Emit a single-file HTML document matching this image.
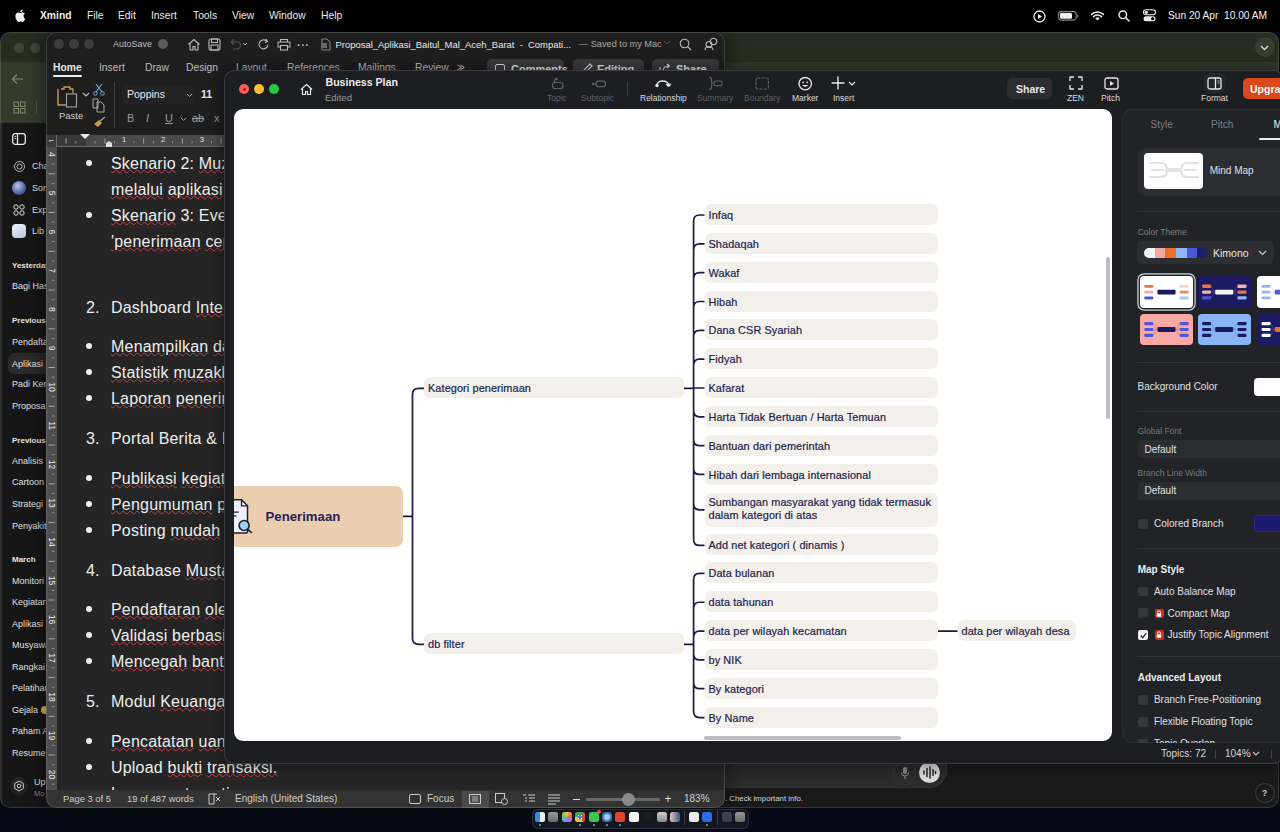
<!DOCTYPE html>
<html><head><meta charset="utf-8">
<style>
*{margin:0;padding:0;box-sizing:border-box}
html,body{width:1280px;height:832px;overflow:hidden;background:#070a14;font-family:"Liberation Sans",sans-serif}
.a{position:absolute}
.t{position:absolute;white-space:nowrap;line-height:1}
svg{position:absolute;overflow:visible}
/* menu bar */
#menubar{left:0;top:0;width:1280px;height:32px;background:#000}
#menubar .t{color:#f2f2f2;font-size:10.3px;top:10.5px}
/* green window */
#gw{left:0;top:32px;width:1279px;height:776px;background:#1a1a1a;border-radius:10px;overflow:hidden}
#gwhead{left:0;top:0;width:1279px;height:30px;background:#272d22}
#gwhead2{left:0;top:30px;width:1279px;height:61px;background:#333c2c}
#gwside{left:0;top:91px;width:60px;height:690px;background:#161616}
#gw .t{color:#e2e2e2;font-size:9px}
#gw .h{font-weight:bold;font-size:8px;color:#e6e6e6}
/* word window */
#ww{left:46px;top:32px;width:679px;height:776px;background:#1e1e1e;border-radius:10px;overflow:hidden;box-shadow:0 0 18px 3px rgba(0,0,0,.4)}
#ww .tab{color:#bdbdbd;font-size:10.3px;top:30.5px}
#doc{left:11px;top:115px;width:668px;height:643px;background:#252525}
#doc .l{position:absolute;left:54px;color:#eeeeee;font-size:16px;white-space:nowrap;line-height:1;letter-spacing:0.2px}
#doc .sq{text-decoration:underline wavy #c2414b;text-decoration-thickness:1px;text-underline-offset:0px}
#doc .b{position:absolute;left:29px;width:6px;height:6px;border-radius:50%;background:#eee}
#doc .n{position:absolute;left:29px;color:#eee;font-size:16px;line-height:1}
/* xmind window */
#xw{left:224px;top:70px;width:1060px;height:694px;background:#1c1e21;border-radius:10px;overflow:hidden;box-shadow:inset 0 0 0 1px #3c3d40, 0 0 14px 2px rgba(0,0,0,.4)}
#canvas{left:10px;top:39px;width:878px;height:632px;background:#fff;border-radius:9px;overflow:hidden}
.node{position:absolute;background:#f3efea;border-radius:6px;color:#211e4c;font-size:10.9px;letter-spacing:0.1px;padding-left:4px;line-height:22px;white-space:nowrap;height:21px;-webkit-text-stroke:0.2px #211e4c}
#xw .tl{color:#5f6166;font-size:8.5px;top:23.5px}
#xw .tlw{color:#dcdcdc;font-size:8.5px;top:23.5px}
#panel{left:898px;top:38.5px;width:170px;height:634px;background:#212327;border-radius:10px;box-shadow:inset 0 0 0 1px #2c2e32;overflow:hidden}
#panel .t{color:#d8d8d8;font-size:10px}
#panel .s{color:#8a8c90;font-size:8.5px}
#panel .h{color:#e6e6e6;font-size:10px;font-weight:bold}
.cb{position:absolute;width:9px;height:9px;border-radius:2px;background:#3a3c40}
.sep{position:absolute;height:1px;background:#34363a}
.dd{position:absolute;height:20px;background:#2d2f33;border-radius:4px}
</style></head><body>

<!-- ============ MENU BAR ============ -->
<div id="menubar" class="a">
  <svg style="left:15px;top:9px" width="11" height="13" viewBox="0 0 11 13"><path d="M8.6 6.9c0-1.5 1.2-2.2 1.3-2.3-.7-1-1.8-1.2-2.2-1.2-.9-.1-1.8.6-2.3.6-.5 0-1.2-.5-2-.5C2.4 3.5 1.4 4.1.9 5c-1.1 1.9-.3 4.8.8 6.300.5.8 1.100 1.600 1.900 1.600.800 0 1-.5 2-.5s1.200.5 2 .5c.8 0 1.300-.8 1.800-1.500.6-.8.8-1.600.8-1.700 0 0-1.600-.6-1.600-2.800zM7.100 2.400c.4-.5.7-1.200.6-1.900-.6 0-1.300.4-1.800.9-.4.400-.7 1.100-.6 1.800.7.100 1.400-.3 1.800-.8z" fill="#f2f2f2"/></svg>
  <div class="t" style="left:40px;font-weight:bold">Xmind</div>
  <div class="t" style="left:87px">File</div>
  <div class="t" style="left:118px">Edit</div>
  <div class="t" style="left:151px">Insert</div>
  <div class="t" style="left:193px">Tools</div>
  <div class="t" style="left:232px">View</div>
  <div class="t" style="left:269px">Window</div>
  <div class="t" style="left:321px">Help</div>
  <!-- status icons -->
  <svg style="left:1033px;top:10px" width="13" height="13"><circle cx="6.5" cy="6.5" r="5.5" fill="none" stroke="#eee" stroke-width="1.3"/><path d="M5 4v5l4-2.5z" fill="#eee"/></svg>
  <svg style="left:1058px;top:11px" width="22" height="10"><rect x="0.6" y="0.6" width="17.5" height="8.5" rx="2.5" fill="none" stroke="#888" stroke-width="1.1"/><rect x="2" y="2" width="12" height="5.8" rx="1.2" fill="#eee"/><path d="M19.3 3.3v3.4c.8-.3 1.200-1 1.200-1.700s-.4-1.400-1.200-1.700z" fill="#888"/></svg>
  <svg style="left:1090px;top:10px" width="15" height="11" viewBox="0 0 15 11"><path d="M7.5 10.6 5.4 8.4a3 3 0 0 1 4.2 0z" fill="#eee"/><path d="M3.6 6.6a5.4 5.4 0 0 1 7.8 0M1.6 4.4a8.3 8.3 0 0 1 11.800 0" fill="none" stroke="#eee" stroke-width="1.6" stroke-linecap="round"/></svg>
  <svg style="left:1118px;top:10px" width="12" height="12"><circle cx="4.8" cy="4.8" r="3.8" fill="none" stroke="#eee" stroke-width="1.4"/><path d="M7.6 7.6l3.400 3.400" stroke="#eee" stroke-width="1.5" stroke-linecap="round"/></svg>
  <svg style="left:1143px;top:9px" width="13" height="13"><rect x="0.5" y="0.8" width="12" height="5" rx="2.5" fill="none" stroke="#eee" stroke-width="1.1"/><circle cx="3.3" cy="3.3" r="1.6" fill="#eee"/><rect x="0.5" y="7.2" width="12" height="5" rx="2.5" fill="#eee"/><circle cx="9.700" cy="9.700" r="1.600" fill="#000"/></svg>
  <div class="t" style="left:1168px;font-size:10.2px">Sun 20 Apr</div>
  <div class="t" style="left:1224px;font-size:10.2px">10.00 AM</div>
</div>

<!-- ============ GREEN (CHAT) WINDOW ============ -->
<div id="gw" class="a">
  <div id="gwhead" class="a"></div>
  <div id="gwhead2" class="a"></div>
  <div class="a" style="left:14px;top:11px;width:10px;height:10px;border-radius:50%;background:#414838"></div>
  <div class="a" style="left:30px;top:11px;width:10px;height:10px;border-radius:50%;background:#414838"></div>
  <svg style="left:11px;top:41px" width="13" height="12"><path d="M12 6H2M6 1.5 1.5 6 6 10.5" fill="none" stroke="#7d8a70" stroke-width="1.2"/></svg>
  <svg style="left:13px;top:69px" width="13" height="13"><rect x="1" y="1" width="4.5" height="4.5" fill="none" stroke="#7d8a70"/><rect x="7.5" y="1" width="4.5" height="4.5" fill="none" stroke="#7d8a70"/><rect x="1" y="7.5" width="4.5" height="4.5" fill="none" stroke="#7d8a70"/><rect x="7.5" y="7.5" width="4.5" height="4.5" fill="none" stroke="#7d8a70"/></svg>
  <div class="a" style="left:36px;top:68px;width:1px;height:14px;background:#4c5643"></div>
  <div id="gwside" class="a"></div>
  <div class="a" style="left:1px;top:91px;width:1px;height:685px;background:#2c2c2c"></div>
  <svg style="left:12px;top:101px" width="14" height="12"><rect x="0.7" y="0.7" width="12.6" height="10.6" rx="2.5" fill="none" stroke="#e8e8e8" stroke-width="1.3"/><path d="M5.5 1v10" stroke="#e8e8e8" stroke-width="1.3"/><path d="M2.500 3.500h1.500M2.500 5.500h1.500" stroke="#e8e8e8" stroke-width="0.9"/></svg>
  <svg style="left:13px;top:128px" width="13" height="13"><circle cx="6.5" cy="6.5" r="5" fill="none" stroke="#bbb" stroke-width="1"/><circle cx="6.5" cy="6.5" r="2.5" fill="none" stroke="#bbb" stroke-width="1"/></svg>
  <div class="t" style="left:32px;top:130px;font-size:9px;color:#e2e2e2">Cha</div>
  <div class="a" style="left:12px;top:149px;width:14px;height:14px;border-radius:50%;background:radial-gradient(circle at 40% 35%,#b9c6e8,#4f64a8 60%,#2a3566)"></div>
  <div class="t" style="left:32px;top:152px;font-size:9px;color:#e2e2e2">Sor</div>
  <svg style="left:13px;top:172px" width="12" height="12"><circle cx="3" cy="3" r="2.2" fill="none" stroke="#ddd"/><circle cx="9" cy="3" r="2.2" fill="none" stroke="#ddd"/><circle cx="3" cy="9" r="2.2" fill="none" stroke="#ddd"/><circle cx="9" cy="9" r="2.2" fill="none" stroke="#ddd"/></svg>
  <div class="t" style="left:32px;top:174px;font-size:9px;color:#e2e2e2">Exp</div>
  <div class="a" style="left:12px;top:192px;width:14px;height:14px;border-radius:4px;background:linear-gradient(160deg,#f2f4fa,#b8c4dc)"></div>
  <div class="t" style="left:32px;top:195px;font-size:9px;color:#e2e2e2">Lib</div>
  <div class="t h" style="left:12px;top:230px">Yesterday</div>
  <div class="t" style="left:12px;top:250px">Bagi Has</div>
  <div class="t h" style="left:12px;top:285px">Previous</div>
  <div class="t" style="left:12px;top:306px">Pendafta</div>
  <div class="a" style="left:7.5px;top:320.5px;width:53px;height:21px;border-radius:6px;background:#2a2a2a"></div>
  <div class="t" style="left:12px;top:328px">Aplikasi</div>
  <div class="t" style="left:12px;top:348px">Padi Ken</div>
  <div class="t" style="left:12px;top:370px">Proposa</div>
  <div class="t h" style="left:12px;top:405px">Previous</div>
  <div class="t" style="left:12px;top:425px">Analisis</div>
  <div class="t" style="left:12px;top:446px">Cartoon</div>
  <div class="t" style="left:12px;top:468px">Strategi</div>
  <div class="t" style="left:12px;top:490px">Penyakit</div>
  <div class="t h" style="left:12px;top:524px">March</div>
  <div class="t" style="left:12px;top:545px">Monitori</div>
  <div class="t" style="left:12px;top:566px">Kegiatan</div>
  <div class="t" style="left:12px;top:588px">Aplikasi</div>
  <div class="t" style="left:12px;top:609px">Musyawa</div>
  <div class="t" style="left:12px;top:631px">Rangkai</div>
  <div class="t" style="left:12px;top:652px">Pelatihan</div>
  <div class="t" style="left:12px;top:674px">Gejala <span style="display:inline-block;width:8px;height:8px;border-radius:50%;background:#e0b24a;vertical-align:-1px"></span></div>
  <div class="t" style="left:12px;top:695px">Paham A</div>
  <div class="t" style="left:12px;top:717px">Resume</div>
  <div class="a" style="left:10px;top:745px;width:18px;height:18px;border-radius:50%;background:#222"></div>
  <svg style="left:13px;top:748px" width="12" height="12"><path d="M6 1l4.300 2.500v5L6 11 1.700 8.500v-5z" fill="none" stroke="#ccc" stroke-width="1"/><circle cx="6" cy="6" r="1.8" fill="none" stroke="#ccc"/></svg>
  <div class="t" style="left:34px;top:746px;font-size:9px;color:#e2e2e2">Up</div>
  <div class="t" style="left:34px;top:758px;font-size:7.5px;color:#8a8a8a">Mo</div>
  <!-- chat input -->
  <div class="a" style="left:690px;top:690px;width:257px;height:66px;border-radius:18px;background:linear-gradient(#242424,#2c2c2c);box-shadow:inset 0 0 0 1px #333"></div>
  <div class="a" style="left:893px;top:730px;width:23px;height:23px;border-radius:50%;box-shadow:inset 0 0 0 1px #333"></div>
  <svg style="left:900px;top:734px" width="10" height="14"><rect x="3" y="1" width="4" height="7" rx="2" fill="#8a8a8a"/><path d="M1.500 6.500a3.500 3.500 0 0 0 7 0M5 10v3" fill="none" stroke="#8a8a8a" stroke-width="1"/></svg>
  <div class="a" style="left:919px;top:730px;width:21px;height:21px;border-radius:50%;background:#d9d9d9"></div>
  <svg style="left:922px;top:734px" width="15" height="13"><path d="M2 5v3M5 2.500v8M8 1v11M11 3.500v6M13.500 5.500v2" stroke="#222" stroke-width="1.5" stroke-linecap="round"/></svg>
  <div class="t" style="left:725px;top:762.5px;font-size:7.8px;color:#d8d8d8">. Check important info.</div>
  <div class="a" style="left:1255px;top:751px;width:20px;height:20px;border-radius:50%;box-shadow:inset 0 0 0 1px #3a3a3a"></div>
  <div class="t" style="left:1262px;top:757px;font-size:8.5px;color:#ccc;font-weight:bold">?</div>
  <!-- right top chevron -->
  <div class="a" style="left:1254.5px;top:5px;width:20px;height:20px;border-radius:50%;background:#393d34"></div>
  <svg style="left:1260px;top:12.5px" width="9" height="6"><path d="M1 1l3.500 3.500L8 1" fill="none" stroke="#ddd" stroke-width="1.3"/></svg>
  <div class="a" style="left:0;top:0;width:1279px;height:776px;border-radius:10px;box-shadow:inset 0 0 0 1px rgba(255,255,255,.13)"></div>
</div>

<!-- ============ WORD WINDOW ============ -->
<div id="ww" class="a">
  <!-- title bar -->
  <div class="a" style="left:8px;top:7px;width:10px;height:10px;border-radius:50%;background:#3d3d3d"></div>
  <div class="a" style="left:23px;top:7px;width:10px;height:10px;border-radius:50%;background:#3d3d3d"></div>
  <div class="a" style="left:38px;top:7px;width:10px;height:10px;border-radius:50%;background:#3d3d3d"></div>
  <div class="t" style="left:67px;top:7.5px;font-size:9px;color:#bfbfbf">AutoSave</div>
  <div class="a" style="left:112px;top:7px;width:10px;height:10px;border-radius:50%;background:#5a5a5a"></div>
  <svg style="left:141px;top:6px" width="14" height="13"><path d="M1.5 6.5 7 1.5l5.5 5M3 5.2V12h3V8.5h2V12h3V5.2" fill="none" stroke="#bbb" stroke-width="1.1"/></svg>
  <svg style="left:162px;top:6px" width="13" height="13"><rect x="1" y="1" width="11" height="11" rx="2" fill="none" stroke="#bbb" stroke-width="1.1"/><rect x="3.5" y="1" width="6" height="3.5" fill="none" stroke="#bbb" stroke-width="1"/><rect x="3" y="7" width="7" height="5" fill="none" stroke="#bbb" stroke-width="1"/></svg>
  <svg style="left:182px;top:6px" width="20" height="13"><path d="M3 4h6a3.5 3.5 0 0 1 0 7H5M3 4l3-3M3 4l3 3" fill="none" stroke="#555" stroke-width="1.1"/><path d="M15 5l2 2 2-2" fill="none" stroke="#aaa" stroke-width="1"/></svg>
  <svg style="left:211px;top:6px" width="13" height="13"><path d="M11 6.5A4.5 4.5 0 1 1 9.500 3M9 1l1.5 2.5L8 4.500" fill="none" stroke="#bbb" stroke-width="1.1"/></svg>
  <svg style="left:231px;top:6px" width="14" height="13"><path d="M3.5 4V1.5h7V4M2 4h10a1 1 0 0 1 1 1v4h-2.5M3.5 9H1V5a1 1 0 0 1 1-1M3.500 7.500h7v4.5h-7z" fill="none" stroke="#bbb" stroke-width="1.1"/></svg>
  <div class="t" style="left:251px;top:7.5px;font-size:11px;color:#bbb;letter-spacing:0.5px;font-weight:bold">···</div>
  <svg style="left:275px;top:6px" width="10" height="13"><path d="M1 1h5l3 3v8H1z" fill="none" stroke="#888" stroke-width="1"/><rect x="0" y="5" width="6" height="5" fill="#666"/></svg>
  <div class="t" style="left:289.5px;top:7.5px;font-size:9.45px;color:#e8e8e8">Proposal_Aplikasi_Baitul_Mal_Aceh_Barat&nbsp; - &nbsp;Compati...</div>
  <div class="t" style="left:533px;top:7.5px;font-size:9.2px;color:#a8a8a8">— Saved to my Mac</div>
  <svg style="left:617px;top:8px" width="8" height="6"><path d="M1 1l3 3 3-3" fill="none" stroke="#555" stroke-width="1"/></svg>
  <svg style="left:633px;top:6px" width="13" height="13"><circle cx="5.5" cy="5.5" r="4.3" fill="none" stroke="#bbb" stroke-width="1.1"/><path d="M8.5 8.5l3.5 3.5" stroke="#bbb" stroke-width="1.1"/></svg>
  <svg style="left:658px;top:5px" width="15" height="14"><circle cx="9.5" cy="4.5" r="3.2" fill="none" stroke="#bbb" stroke-width="1.1"/><circle cx="5" cy="7.5" r="3" fill="none" stroke="#bbb" stroke-width="1.1"/><path d="M1 13c0-2 2-3.5 4-3.5s4 1.5 4 3.5" fill="none" stroke="#bbb" stroke-width="1.1"/></svg>
  <!-- tabs -->
  <div class="t tab" style="left:7px;color:#e6e6e6;font-weight:bold">Home</div>
  <div class="a" style="left:7px;top:43px;width:29px;height:2px;border-radius:1px;background:#eee"></div>
  <div class="t tab" style="left:53px">Insert</div>
  <div class="t tab" style="left:99px">Draw</div>
  <div class="t tab" style="left:140px">Design</div>
  <div class="t tab" style="left:190px">Layout</div>
  <div class="t tab" style="left:241px">References</div>
  <div class="t tab" style="left:312px">Mailings</div>
  <div class="t tab" style="left:369px">Review</div>
  <div class="t tab" style="left:411px;letter-spacing:-2.5px;transform:scaleX(.8);transform-origin:left">&gt;&gt;</div>
  <div class="a" style="left:441px;top:27px;width:77px;height:22px;border-radius:5px;background:#3b3b3b"></div>
  <div class="a" style="left:449px;top:32px;width:10px;height:10px;border:1.1px solid #ddd;border-radius:2px"></div>
  <div class="t" style="left:465px;top:32px;font-size:11px;color:#e6e6e6;font-weight:bold">Comments</div>
  <div class="a" style="left:527px;top:27px;width:71px;height:22px;border-radius:5px;background:#3b3b3b"></div>
  <svg style="left:535px;top:31px" width="12" height="12"><path d="M2 10l1-3 6-6 2 2-6 6z" fill="none" stroke="#ddd" stroke-width="1.1"/></svg>
  <div class="t" style="left:551px;top:32px;font-size:11px;color:#e6e6e6;font-weight:bold">Editing</div>
  <div class="a" style="left:606px;top:27px;width:67px;height:22px;border-radius:5px;background:#3b3b3b"></div>
  <svg style="left:613px;top:31px" width="12" height="12"><path d="M1 4v7h9M4 8c0-3 2-5 6-5M8 1l2.5 2L8 5" fill="none" stroke="#ddd" stroke-width="1.1"/></svg>
  <div class="t" style="left:630px;top:32px;font-size:11px;color:#e6e6e6;font-weight:bold">Share</div>
  <!-- ribbon -->
  <svg style="left:10px;top:52px" width="26" height="26"><path d="M5 5h3V3h6v2h3v4" fill="none" stroke="#c99a52" stroke-width="1.3"/><path d="M2 5v16h8" fill="none" stroke="#c99a52" stroke-width="1.4"/><rect x="10.5" y="10" width="10" height="13" fill="none" stroke="#9a9a9a" stroke-width="1.2"/></svg>
  <svg style="left:36px;top:60px" width="8" height="6"><path d="M1 1l3 3 3-3" fill="none" stroke="#bbb" stroke-width="1.1"/></svg>
  <div class="t" style="left:13px;top:79px;font-size:9.5px;color:#cfcfcf">Paste</div>
  <svg style="left:47px;top:51px" width="12" height="13"><path d="M3 1l6 8M9 1 3 9" stroke="#7aa4d6" stroke-width="1.1"/><circle cx="2.5" cy="10.5" r="1.8" fill="none" stroke="#7aa4d6"/><circle cx="9.5" cy="10.5" r="1.8" fill="none" stroke="#7aa4d6"/></svg>
  <svg style="left:46px;top:66px" width="14" height="15"><path d="M1 1h5v9H1zM5 4h4l3 3v7H5z" fill="none" stroke="#aaa" stroke-width="1"/></svg>
  <svg style="left:47px;top:84px" width="14" height="12"><path d="M1 8l5-4 3 3-4 4z" fill="#c99a52"/><path d="M7 5l5-4" stroke="#aaa" stroke-width="1.3"/></svg>
  <div class="a" style="left:68px;top:50px;width:1px;height:46px;background:#3d3d3d"></div>
  <div class="a" style="left:76px;top:54px;width:73px;height:18px;border-radius:4px;background:#232323"></div>
  <div class="t" style="left:81px;top:57px;font-size:10.5px;color:#e8e8e8">Poppins</div>
  <svg style="left:140px;top:61px" width="7" height="5"><path d="M1 1l2.5 2.5L6 1" fill="none" stroke="#bbb" stroke-width="1"/></svg>
  <div class="t" style="left:155px;top:57px;font-size:10.5px;color:#e8e8e8;font-weight:bold">11</div>
  <div class="t" style="left:81px;top:81px;font-size:11px;color:#9a9a9a">B</div>
  <div class="t" style="left:100px;top:81px;font-size:11px;color:#9a9a9a;font-style:italic">I</div>
  <div class="t" style="left:119px;top:81px;font-size:11px;color:#9a9a9a;text-decoration:underline">U</div>
  <svg style="left:134px;top:85px" width="7" height="5"><path d="M1 1l2.5 2.5L6 1" fill="none" stroke="#999" stroke-width="1"/></svg>
  <div class="t" style="left:146px;top:81px;font-size:11px;color:#9a9a9a;text-decoration:line-through">ab</div>
  <div class="t" style="left:168px;top:81px;font-size:11px;color:#9a9a9a">x</div>
  <!-- rulers -->
  <div class="a" style="left:0px;top:102.5px;width:679px;height:12px;background:#393939"></div>
  <div class="a" style="left:39.5px;top:102.5px;width:640px;height:12px;background:#4b4b4b"></div>
  <div class="a" style="left:11px;top:114px;width:668px;height:1px;background:#6a6a6a"></div>
  <div class="a" style="left:10px;top:103px;width:1px;height:655px;background:#6a6a6a"></div>
  <svg style="left:34px;top:102px" width="10" height="6"><path d="M0 0h10L5 5z" fill="#eee"/></svg>
  <svg style="left:59px;top:108px" width="8" height="9"><path d="M1 8V3l3-2 3 2v5z" fill="#ddd"/></svg>
  <div class="t" style="left:3px;top:105px;font-size:8px;color:#ddd">⌐</div>
  <div class="a" style="left:0px;top:115px;width:10.5px;height:643px;background:#4d4d4d"></div>
  <svg style="left:0;top:0" width="679" height="776"><path d="M20.1 106.5v5" stroke="#a0a0a0" stroke-width="1"/><path d="M29.8 109v2.5" stroke="#909090" stroke-width="1"/><path d="M49.2 109v2.5" stroke="#909090" stroke-width="1"/><path d="M58.9 106.5v5" stroke="#a0a0a0" stroke-width="1"/><path d="M68.6 109v2.5" stroke="#909090" stroke-width="1"/><text x="78.2" y="109.80000000000001" font-size="7.5" fill="#e6e6e6" text-anchor="middle" font-family="Liberation Sans">1</text><path d="M87.9 109v2.5" stroke="#909090" stroke-width="1"/><path d="M97.6 106.5v5" stroke="#a0a0a0" stroke-width="1"/><path d="M107.3 109v2.5" stroke="#909090" stroke-width="1"/><text x="117.0" y="109.80000000000001" font-size="7.5" fill="#e6e6e6" text-anchor="middle" font-family="Liberation Sans">2</text><path d="M126.7 109v2.5" stroke="#909090" stroke-width="1"/><path d="M136.4 106.5v5" stroke="#a0a0a0" stroke-width="1"/><path d="M146.1 109v2.5" stroke="#909090" stroke-width="1"/><text x="155.8" y="109.80000000000001" font-size="7.5" fill="#e6e6e6" text-anchor="middle" font-family="Liberation Sans">3</text><path d="M165.4 109v2.5" stroke="#909090" stroke-width="1"/><path d="M175.1 106.5v5" stroke="#a0a0a0" stroke-width="1"/><path d="M184.8 109v2.5" stroke="#909090" stroke-width="1"/><text x="194.5" y="109.80000000000001" font-size="7.5" fill="#e6e6e6" text-anchor="middle" font-family="Liberation Sans">4</text><path d="M204.2 109v2.5" stroke="#909090" stroke-width="1"/><path d="M213.9 106.5v5" stroke="#a0a0a0" stroke-width="1"/><path d="M223.6 109v2.5" stroke="#909090" stroke-width="1"/><text x="233.2" y="109.80000000000001" font-size="7.5" fill="#e6e6e6" text-anchor="middle" font-family="Liberation Sans">5</text><path d="M242.9 109v2.5" stroke="#909090" stroke-width="1"/><path d="M252.6 106.5v5" stroke="#a0a0a0" stroke-width="1"/><path d="M262.3 109v2.5" stroke="#909090" stroke-width="1"/><text x="272.0" y="109.80000000000001" font-size="7.5" fill="#e6e6e6" text-anchor="middle" font-family="Liberation Sans">6</text><path d="M281.7 109v2.5" stroke="#909090" stroke-width="1"/><path d="M291.4 106.5v5" stroke="#a0a0a0" stroke-width="1"/><path d="M301.1 109v2.5" stroke="#909090" stroke-width="1"/><text x="310.8" y="109.80000000000001" font-size="7.5" fill="#e6e6e6" text-anchor="middle" font-family="Liberation Sans">7</text><path d="M320.4 109v2.5" stroke="#909090" stroke-width="1"/><path d="M330.1 106.5v5" stroke="#a0a0a0" stroke-width="1"/><path d="M339.8 109v2.5" stroke="#909090" stroke-width="1"/><text x="349.5" y="109.80000000000001" font-size="7.5" fill="#e6e6e6" text-anchor="middle" font-family="Liberation Sans">8</text><path d="M359.2 109v2.5" stroke="#909090" stroke-width="1"/><path d="M368.9 106.5v5" stroke="#a0a0a0" stroke-width="1"/><path d="M378.6 109v2.5" stroke="#909090" stroke-width="1"/><text x="388.2" y="109.80000000000001" font-size="7.5" fill="#e6e6e6" text-anchor="middle" font-family="Liberation Sans">9</text><path d="M397.9 109v2.5" stroke="#909090" stroke-width="1"/><path d="M407.6 106.5v5" stroke="#a0a0a0" stroke-width="1"/><path d="M417.3 109v2.5" stroke="#909090" stroke-width="1"/><text x="427.0" y="109.80000000000001" font-size="7.5" fill="#e6e6e6" text-anchor="middle" font-family="Liberation Sans">10</text><path d="M436.7 109v2.5" stroke="#909090" stroke-width="1"/><path d="M446.4 106.5v5" stroke="#a0a0a0" stroke-width="1"/><path d="M456.1 109v2.5" stroke="#909090" stroke-width="1"/><text x="465.8" y="109.80000000000001" font-size="7.5" fill="#e6e6e6" text-anchor="middle" font-family="Liberation Sans">11</text><path d="M475.4 109v2.5" stroke="#909090" stroke-width="1"/><path d="M485.1 106.5v5" stroke="#a0a0a0" stroke-width="1"/><path d="M494.8 109v2.5" stroke="#909090" stroke-width="1"/><text x="504.5" y="109.80000000000001" font-size="7.5" fill="#e6e6e6" text-anchor="middle" font-family="Liberation Sans">12</text><path d="M514.2 109v2.5" stroke="#909090" stroke-width="1"/><path d="M523.9 106.5v5" stroke="#a0a0a0" stroke-width="1"/><path d="M533.6 109v2.5" stroke="#909090" stroke-width="1"/><text x="543.2" y="109.80000000000001" font-size="7.5" fill="#e6e6e6" text-anchor="middle" font-family="Liberation Sans">13</text><path d="M552.9 109v2.5" stroke="#909090" stroke-width="1"/><path d="M562.6 106.5v5" stroke="#a0a0a0" stroke-width="1"/><path d="M572.3 109v2.5" stroke="#909090" stroke-width="1"/><text x="582.0" y="109.80000000000001" font-size="7.5" fill="#e6e6e6" text-anchor="middle" font-family="Liberation Sans">14</text><path d="M591.7 109v2.5" stroke="#909090" stroke-width="1"/><path d="M601.4 106.5v5" stroke="#a0a0a0" stroke-width="1"/><path d="M611.1 109v2.5" stroke="#909090" stroke-width="1"/><text x="620.8" y="109.80000000000001" font-size="7.5" fill="#e6e6e6" text-anchor="middle" font-family="Liberation Sans">15</text><path d="M630.4 109v2.5" stroke="#909090" stroke-width="1"/><path d="M640.1 106.5v5" stroke="#a0a0a0" stroke-width="1"/><path d="M649.8 109v2.5" stroke="#909090" stroke-width="1"/><text x="659.5" y="109.80000000000001" font-size="7.5" fill="#e6e6e6" text-anchor="middle" font-family="Liberation Sans">16</text><path d="M669.2 109v2.5" stroke="#909090" stroke-width="1"/><text x="0" y="0" transform="translate(5,122.4) rotate(90)" font-size="8.5" fill="#ececec" text-anchor="middle" dominant-baseline="middle" font-family="Liberation Sans">4</text><path d="M6 132.1h2.5" stroke="#969696" stroke-width="1"/><path d="M2.5 141.8h6" stroke="#a8a8a8" stroke-width="1"/><path d="M6 151.5h2.5" stroke="#969696" stroke-width="1"/><text x="0" y="0" transform="translate(5,161.2) rotate(90)" font-size="8.5" fill="#ececec" text-anchor="middle" dominant-baseline="middle" font-family="Liberation Sans">5</text><path d="M6 170.8h2.5" stroke="#969696" stroke-width="1"/><path d="M2.5 180.5h6" stroke="#a8a8a8" stroke-width="1"/><path d="M6 190.2h2.5" stroke="#969696" stroke-width="1"/><text x="0" y="0" transform="translate(5,199.9) rotate(90)" font-size="8.5" fill="#ececec" text-anchor="middle" dominant-baseline="middle" font-family="Liberation Sans">6</text><path d="M6 209.6h2.5" stroke="#969696" stroke-width="1"/><path d="M2.5 219.3h6" stroke="#a8a8a8" stroke-width="1"/><path d="M6 229.0h2.5" stroke="#969696" stroke-width="1"/><text x="0" y="0" transform="translate(5,238.6) rotate(90)" font-size="8.5" fill="#ececec" text-anchor="middle" dominant-baseline="middle" font-family="Liberation Sans">7</text><path d="M6 248.3h2.5" stroke="#969696" stroke-width="1"/><path d="M2.5 258.0h6" stroke="#a8a8a8" stroke-width="1"/><path d="M6 267.7h2.5" stroke="#969696" stroke-width="1"/><text x="0" y="0" transform="translate(5,277.4) rotate(90)" font-size="8.5" fill="#ececec" text-anchor="middle" dominant-baseline="middle" font-family="Liberation Sans">8</text><path d="M6 287.1h2.5" stroke="#969696" stroke-width="1"/><path d="M2.5 296.8h6" stroke="#a8a8a8" stroke-width="1"/><path d="M6 306.5h2.5" stroke="#969696" stroke-width="1"/><text x="0" y="0" transform="translate(5,316.1) rotate(90)" font-size="8.5" fill="#ececec" text-anchor="middle" dominant-baseline="middle" font-family="Liberation Sans">9</text><path d="M6 325.8h2.5" stroke="#969696" stroke-width="1"/><path d="M2.5 335.5h6" stroke="#a8a8a8" stroke-width="1"/><path d="M6 345.2h2.5" stroke="#969696" stroke-width="1"/><text x="0" y="0" transform="translate(5,354.9) rotate(90)" font-size="8.5" fill="#ececec" text-anchor="middle" dominant-baseline="middle" font-family="Liberation Sans">10</text><path d="M6 364.6h2.5" stroke="#969696" stroke-width="1"/><path d="M2.5 374.3h6" stroke="#a8a8a8" stroke-width="1"/><path d="M6 384.0h2.5" stroke="#969696" stroke-width="1"/><text x="0" y="0" transform="translate(5,393.6) rotate(90)" font-size="8.5" fill="#ececec" text-anchor="middle" dominant-baseline="middle" font-family="Liberation Sans">11</text><path d="M6 403.3h2.5" stroke="#969696" stroke-width="1"/><path d="M2.5 413.0h6" stroke="#a8a8a8" stroke-width="1"/><path d="M6 422.7h2.5" stroke="#969696" stroke-width="1"/><text x="0" y="0" transform="translate(5,432.4) rotate(90)" font-size="8.5" fill="#ececec" text-anchor="middle" dominant-baseline="middle" font-family="Liberation Sans">12</text><path d="M6 442.1h2.5" stroke="#969696" stroke-width="1"/><path d="M2.5 451.8h6" stroke="#a8a8a8" stroke-width="1"/><path d="M6 461.5h2.5" stroke="#969696" stroke-width="1"/><text x="0" y="0" transform="translate(5,471.1) rotate(90)" font-size="8.5" fill="#ececec" text-anchor="middle" dominant-baseline="middle" font-family="Liberation Sans">13</text><path d="M6 480.8h2.5" stroke="#969696" stroke-width="1"/><path d="M2.5 490.5h6" stroke="#a8a8a8" stroke-width="1"/><path d="M6 500.2h2.5" stroke="#969696" stroke-width="1"/><text x="0" y="0" transform="translate(5,509.9) rotate(90)" font-size="8.5" fill="#ececec" text-anchor="middle" dominant-baseline="middle" font-family="Liberation Sans">14</text><path d="M6 519.6h2.5" stroke="#969696" stroke-width="1"/><path d="M2.5 529.3h6" stroke="#a8a8a8" stroke-width="1"/><path d="M6 539.0h2.5" stroke="#969696" stroke-width="1"/><text x="0" y="0" transform="translate(5,548.6) rotate(90)" font-size="8.5" fill="#ececec" text-anchor="middle" dominant-baseline="middle" font-family="Liberation Sans">15</text><path d="M6 558.3h2.5" stroke="#969696" stroke-width="1"/><path d="M2.5 568.0h6" stroke="#a8a8a8" stroke-width="1"/><path d="M6 577.7h2.5" stroke="#969696" stroke-width="1"/><text x="0" y="0" transform="translate(5,587.4) rotate(90)" font-size="8.5" fill="#ececec" text-anchor="middle" dominant-baseline="middle" font-family="Liberation Sans">16</text><path d="M6 597.1h2.5" stroke="#969696" stroke-width="1"/><path d="M2.5 606.8h6" stroke="#a8a8a8" stroke-width="1"/><path d="M6 616.5h2.5" stroke="#969696" stroke-width="1"/><text x="0" y="0" transform="translate(5,626.1) rotate(90)" font-size="8.5" fill="#ececec" text-anchor="middle" dominant-baseline="middle" font-family="Liberation Sans">17</text><path d="M6 635.8h2.5" stroke="#969696" stroke-width="1"/><path d="M2.5 645.5h6" stroke="#a8a8a8" stroke-width="1"/><path d="M6 655.2h2.5" stroke="#969696" stroke-width="1"/><text x="0" y="0" transform="translate(5,664.9) rotate(90)" font-size="8.5" fill="#ececec" text-anchor="middle" dominant-baseline="middle" font-family="Liberation Sans">18</text><path d="M6 674.6h2.5" stroke="#969696" stroke-width="1"/><path d="M2.5 684.3h6" stroke="#a8a8a8" stroke-width="1"/><path d="M6 694.0h2.5" stroke="#969696" stroke-width="1"/><text x="0" y="0" transform="translate(5,703.6) rotate(90)" font-size="8.5" fill="#ececec" text-anchor="middle" dominant-baseline="middle" font-family="Liberation Sans">19</text><path d="M6 713.3h2.5" stroke="#969696" stroke-width="1"/><path d="M2.5 723.0h6" stroke="#a8a8a8" stroke-width="1"/><path d="M6 732.7h2.5" stroke="#969696" stroke-width="1"/><text x="0" y="0" transform="translate(5,742.4) rotate(90)" font-size="8.5" fill="#ececec" text-anchor="middle" dominant-baseline="middle" font-family="Liberation Sans">20</text><path d="M6 752.1h2.5" stroke="#969696" stroke-width="1"/></svg>
  <!-- document -->
  <div id="doc" class="a">
<div class="b" style="top:13px"></div>
<div class="l" style="top:9px"><span class="sq">Skenario</span> 2: <span class="sq">Muzakki membayar zakat</span></div>
<div class="l" style="top:35px"><span class="sq">melalui</span> <span class="sq">aplikasi</span></div>
<div class="b" style="top:65px"></div>
<div class="l" style="top:61px"><span class="sq">Skenario</span> 3: Event zakat</div>
<div class="l" style="top:87px"><span class="sq">'penerimaan</span> <span class="sq">cepat</span></div>
<div class="n" style="top:153px">2.</div>
<div class="l" style="top:153px">Dashboard <span class="sq">Interaktif</span></div>
<div class="b" style="top:196px"></div>
<div class="l" style="top:192px"><span class="sq">Menampilkan</span> <span class="sq">data</span></div>
<div class="b" style="top:222px"></div>
<div class="l" style="top:218px"><span class="sq">Statistik</span> <span class="sq">muzakki</span></div>
<div class="b" style="top:248px"></div>
<div class="l" style="top:244px"><span class="sq">Laporan</span> <span class="sq">penerimaan</span></div>
<div class="n" style="top:284px">3.</div>
<div class="l" style="top:284px">Portal Berita &amp; Informasi</div>
<div class="b" style="top:328px"></div>
<div class="l" style="top:324px"><span class="sq">Publikasi</span> <span class="sq">kegiatan</span></div>
<div class="b" style="top:354px"></div>
<div class="l" style="top:350px"><span class="sq">Pengumuman</span> <span class="sq">penting</span></div>
<div class="b" style="top:380px"></div>
<div class="l" style="top:376px">Posting <span class="sq">mudah</span></div>
<div class="n" style="top:416px">4.</div>
<div class="l" style="top:416px">Database <span class="sq">Mustahik</span></div>
<div class="b" style="top:459px"></div>
<div class="l" style="top:455px"><span class="sq">Pendaftaran</span> <span class="sq">oleh</span></div>
<div class="b" style="top:485px"></div>
<div class="l" style="top:481px"><span class="sq">Validasi</span> <span class="sq">berbasis</span></div>
<div class="b" style="top:511px"></div>
<div class="l" style="top:507px"><span class="sq">Mencegah</span> <span class="sq">bantuan</span></div>
<div class="n" style="top:547px">5.</div>
<div class="l" style="top:547px">Modul <span class="sq">Keuangan</span></div>
<div class="b" style="top:591px"></div>
<div class="l" style="top:587px"><span class="sq">Pencatatan</span> <span class="sq">uang</span></div>
<div class="b" style="top:617px"></div>
<div class="l" style="top:613px">Upload <span class="sq">bukti</span> <span class="sq">transaksi.</span></div>
<div class="b" style="top:643px"></div>
<div class="l" style="top:639px"><span class="sq">Laporan</span> <span class="sq">otomatis</span></div>
  </div>
  <!-- status bar -->
  <div class="a" style="left:0px;top:758px;width:679px;height:18px;background:#333"></div>
  <div class="t" style="left:17px;top:762px;font-size:9.4px;color:#cfcfcf">Page 3 of 5</div>
  <div class="t" style="left:81px;top:762px;font-size:9.4px;color:#cfcfcf">19 of 487 words</div>
  <svg style="left:162px;top:761px" width="13" height="12"><path d="M1 1h5v10H1zM6 1h3" fill="none" stroke="#ccc" stroke-width="1"/><path d="M8 4l4 4M12 4 8 8" stroke="#ccc" stroke-width="1"/></svg>
  <div class="t" style="left:189px;top:762px;font-size:10px;color:#cfcfcf">English (United States)</div>
  <svg style="left:363px;top:762px" width="12" height="10"><rect x="0.5" y="0.5" width="11" height="9" rx="1.5" fill="none" stroke="#ccc"/></svg>
  <div class="t" style="left:381px;top:762px;font-size:10px;color:#cfcfcf">Focus</div>
  <div class="a" style="left:416px;top:759px;width:27px;height:17px;background:#4a4a4a"></div>
  <svg style="left:423px;top:762px" width="12" height="10"><rect x="0.5" y="0.5" width="11" height="9" fill="none" stroke="#ccc"/><path d="M3 3h6M3 5h6M3 7h6" stroke="#ccc" stroke-width=".8"/></svg>
  <svg style="left:449px;top:761px" width="13" height="12"><rect x="0.5" y="0.5" width="9" height="9" fill="none" stroke="#ccc"/><circle cx="9.5" cy="8.5" r="3" fill="#333" stroke="#ccc"/></svg>
  <svg style="left:477px;top:762px" width="12" height="10"><path d="M0 1h3M5 1h7M2 4h2M6 4h6M2 7h2M6 7h6" stroke="#ccc" stroke-width="1"/></svg>
  <svg style="left:502px;top:762px" width="12" height="10"><path d="M0 1h12M0 4h12M0 7h12M0 10h8" stroke="#ccc" stroke-width="1"/></svg>
  <div class="a" style="left:527px;top:767px;width:7px;height:1.3px;background:#ddd"></div>
  <div class="a" style="left:540px;top:766px;width:74px;height:3px;border-radius:2px;background:#6a6a6a"></div>
  <div class="a" style="left:576px;top:761px;width:13px;height:13px;border-radius:50%;background:#8a8a8a"></div>
  <div class="t" style="left:618.5px;top:760.5px;font-size:12px;color:#ddd">+</div>
  <div class="t" style="left:638px;top:762px;font-size:10px;color:#cfcfcf">183%</div>
  <div class="a" style="left:0;top:0;width:679px;height:776px;border-radius:10px;box-shadow:inset 0 0 0 1px rgba(255,255,255,.16)"></div>
</div>


<!-- ============ DOCK ============ -->
<div class="a" style="left:532px;top:808.5px;width:217px;height:20px;border-radius:6px;background:rgba(30,34,44,.55);box-shadow:inset 0 0 0 1px #2a2e38"></div>
<div class="a" style="left:534.7px;top:811.5px;width:10px;height:10.5px;border-radius:2.5px;background:linear-gradient(90deg,#2d8cf0 50%,#e9eef8 50%)"></div>
<div class="a" style="left:538.7px;top:824px;width:2px;height:2px;border-radius:50%;background:#9a9a9a"></div>
<div class="a" style="left:548.0px;top:811.5px;width:10px;height:10.5px;border-radius:2.5px;background:linear-gradient(#9a9a9a,#6a6a6a)"></div>
<div class="a" style="left:561.5px;top:811.5px;width:10px;height:10.5px;border-radius:2.5px;background:conic-gradient(#f5b942,#e96b5c,#b36fd6,#5aa3e8,#6ccf6a,#f5b942)"></div>
<div class="a" style="left:575.0px;top:811.5px;width:10px;height:10.5px;border-radius:2.5px;background:radial-gradient(circle,#4a86e8 24%,#fff 26%,#fff 34%,transparent 36%),conic-gradient(from 30deg,#e04a3a 0 33%,#f2c23a 0 66%,#3faa55 0)"></div>
<div class="a" style="left:579.0px;top:824px;width:2px;height:2px;border-radius:50%;background:#9a9a9a"></div>
<div class="a" style="left:588.5px;top:811.5px;width:10px;height:10.5px;border-radius:2.5px;background:#3ec553"></div>
<div class="a" style="left:592.5px;top:824px;width:2px;height:2px;border-radius:50%;background:#9a9a9a"></div>
<div class="a" style="left:602.0px;top:811.5px;width:10px;height:10.5px;border-radius:2.5px;background:radial-gradient(circle,#9dd3f7 30%,#3d6fb6 60%,#1c2f5a)"></div>
<div class="a" style="left:606.0px;top:824px;width:2px;height:2px;border-radius:50%;background:#9a9a9a"></div>
<div class="a" style="left:615.3px;top:811.5px;width:10px;height:10.5px;border-radius:2.5px;background:#e2442c"></div>
<div class="a" style="left:619.3px;top:824px;width:2px;height:2px;border-radius:50%;background:#9a9a9a"></div>
<div class="a" style="left:629.0px;top:811.5px;width:10px;height:10.5px;border-radius:2.5px;background:#f4f4f4"></div>
<div class="a" style="left:642.5px;top:811.5px;width:10px;height:10.5px;border-radius:2.5px;background:#1c1c1c"></div>
<div class="a" style="left:657.0px;top:811.5px;width:10px;height:10.5px;border-radius:2.5px;background:linear-gradient(#cfcfcf,#8a8a8a)"></div>
<div class="a" style="left:669.5px;top:811.5px;width:10px;height:10.5px;border-radius:2.5px;background:linear-gradient(90deg,#e7c3c3,#3c5a8a)"></div>
<div class="a" style="left:688.5px;top:811.5px;width:10px;height:10.5px;border-radius:2.5px;background:#ececec"></div>
<div class="a" style="left:701.5px;top:811.5px;width:10px;height:10.5px;border-radius:2.5px;background:#2d6ee6"></div>
<div class="a" style="left:705.5px;top:824px;width:2px;height:2px;border-radius:50%;background:#9a9a9a"></div>
<div class="a" style="left:722.0px;top:811.5px;width:10px;height:10.5px;border-radius:2.5px;background:#3a4150"></div>
<div class="a" style="left:735.0px;top:811.5px;width:10px;height:10.5px;border-radius:2.5px;background:linear-gradient(#9a9a9a,#6a6a6a)"></div>
<div class="a" style="left:684px;top:811px;width:1px;height:14px;background:#3a3e48"></div>
<div class="a" style="left:717px;top:811px;width:1px;height:14px;background:#3a3e48"></div>
<div class="a" style="left:597px;top:810px;width:4px;height:4px;border-radius:50%;background:#f04a4a"></div>

<!-- ============ XMIND WINDOW ============ -->
<div id="xw" class="a">
  <div class="a" style="left:15px;top:14px;width:10px;height:10px;border-radius:50%;background:#fe5f57"></div>
  <div class="a" style="left:18.5px;top:17.5px;width:3px;height:3px;border-radius:50%;background:#8f1a14"></div>
  <div class="a" style="left:30px;top:14px;width:10px;height:10px;border-radius:50%;background:#febc2e"></div>
  <div class="a" style="left:45px;top:14px;width:10px;height:10px;border-radius:50%;background:#28c840"></div>
  <svg style="left:76px;top:13px" width="13" height="13"><path d="M1 6.500 6.500 1.500 12 6.500M2.500 5.200V11.500h3V8.500h2v3h3V5.200" fill="none" stroke="#e8e8e8" stroke-width="1.2" stroke-linejoin="round"/></svg>
  <div class="t" style="left:101.5px;top:6.5px;font-size:10.6px;font-weight:bold;color:#ececec">Business Plan</div>
  <div class="t" style="left:101px;top:22.5px;font-size:9.5px;color:#9a9b9e">Edited</div>
  <!-- toolbar icons -->
  <svg style="left:326px;top:6px" width="16" height="14"><rect x="2.5" y="6.5" width="10.5" height="6" rx="2.5" fill="none" stroke="#5f6166" stroke-width="1.2"/><path d="M4.5 6.5V4.5Q4.5 3 6 3" fill="none" stroke="#5f6166" stroke-width="1.2"/><circle cx="6.5" cy="3" r="1.2" fill="#5f6166"/></svg>
  <div class="t tl" style="left:323px">Topic</div>
  <svg style="left:366px;top:6px" width="18" height="14"><circle cx="3" cy="8" r="1.3" fill="#5f6166"/><path d="M3 8h3" stroke="#5f6166" stroke-width="1"/><rect x="6" y="5.2" width="9.5" height="5.5" rx="2.5" fill="none" stroke="#5f6166" stroke-width="1.2"/></svg>
  <div class="t tl" style="left:357px">Subtopic</div>
  <div class="a" style="left:403px;top:12px;width:1px;height:14px;background:#3a3c40"></div>
  <svg style="left:430px;top:6px" width="18" height="14"><path d="M3 9.5C3 3.5 14.5 3.5 14.5 9.5" fill="none" stroke="#e8e8e8" stroke-width="1.5"/><circle cx="3" cy="9.5" r="1.7" fill="#e8e8e8"/><path d="M12 8.2l2.5 2.8 2.5-2.8z" fill="#e8e8e8" stroke="#e8e8e8" stroke-width="1" stroke-linejoin="round"/></svg>
  <div class="t tlw" style="left:416px">Relationship</div>
  <svg style="left:482px;top:6px" width="18" height="15"><path d="M3 1.5c2 0 2.5.6 2.5 2v2.200c0 .9.5 1.800 1.500 1.800C6 7.500 5.500 8.300 5.500 9.200v2.300c0 1.400-.5 2-2.500 2" fill="none" stroke="#5f6166" stroke-width="1.2"/><rect x="8" y="5" width="8" height="4.700" rx="1.500" fill="none" stroke="#5f6166" stroke-width="1.200"/></svg>
  <div class="t tl" style="left:473px">Summary</div>
  <svg style="left:530px;top:6px" width="16" height="15"><rect x="2" y="2" width="12.500" height="11" rx="2" fill="none" stroke="#5f6166" stroke-width="1.200" stroke-dasharray="3.2 1.2" stroke-dashoffset="1"/></svg>
  <div class="t tl" style="left:520px">Boundary</div>
  <svg style="left:574px;top:6px" width="15" height="15"><circle cx="7.200" cy="7.700" r="6.200" fill="none" stroke="#e8e8e8" stroke-width="1.300"/><circle cx="5.100" cy="6.300" r=".9" fill="#e8e8e8"/><circle cx="9.300" cy="6.300" r=".9" fill="#e8e8e8"/><path d="M4.300 9c1.500 2.300 4.300 2.300 5.800 0z" fill="#e8e8e8"/></svg>
  <div class="t tlw" style="left:568px">Marker</div>
  <svg style="left:607px;top:6px" width="14" height="14"><path d="M7 0.500v13M0.500 7h13" stroke="#e8e8e8" stroke-width="1.4"/></svg>
  <svg style="left:624px;top:11px" width="8" height="6"><path d="M1 1l3 3 3-3" fill="none" stroke="#e8e8e8" stroke-width="1.2"/></svg>
  <div class="t tlw" style="left:609px">Insert</div>
  <div class="a" style="left:783px;top:8px;width:45px;height:21px;border-radius:5px;background:#2c2e32"></div>
  <div class="t" style="left:792px;top:13.5px;font-size:10.5px;font-weight:bold;color:#e6e6e6">Share</div>
  <svg style="left:845px;top:6px" width="14" height="14"><path d="M1 5V1h4M9 1h4v4M13 9v4H9M5 13H1V9" fill="none" stroke="#e8e8e8" stroke-width="1.3"/></svg>
  <div class="t tlw" style="left:843px">ZEN</div>
  <svg style="left:880px;top:7px" width="15" height="13"><rect x="1" y="1" width="13" height="11" rx="2" fill="none" stroke="#e8e8e8" stroke-width="1.3"/><path d="M6 4v5l4-2.500z" fill="#e8e8e8"/></svg>
  <div class="t tlw" style="left:877px">Pitch</div>
  <div class="a" style="left:980px;top:3px;width:22px;height:20px;border-radius:5px;background:#23252a"></div>
  <svg style="left:983px;top:7px" width="15" height="13"><rect x="1" y="1" width="13" height="11" rx="2" fill="none" stroke="#e8e8e8" stroke-width="1.3"/><path d="M8.500 1v11" stroke="#e8e8e8" stroke-width="1.3"/><path d="M10.500 4h2M10.500 6h2" stroke="#e8e8e8" stroke-width=".8"/></svg>
  <div class="t tlw" style="left:977px">Format</div>
  <div class="a" style="left:1019px;top:8px;width:60px;height:21px;border-radius:5px;background:#d9471b"></div>
  <div class="t" style="left:1026px;top:13.5px;font-size:10.5px;font-weight:bold;color:#fff">Upgrade</div>
  <!-- canvas -->
  <div id="canvas" class="a">
<div class="a" style="left:-10px;top:376.6px;width:179px;height:61.5px;border-radius:7px;background:#ebcdb0"></div>
<svg style="left:0px;top:390px" width="22" height="38"><path d="M-6 0.8h13.5l6 6v25.8a1.5 1.5 0 0 1-1.5 1.5H-6z" fill="#eef2f8" stroke="#1f1d30" stroke-width="1.5"/><path d="M7.5 0.8v6h6" fill="none" stroke="#1f1d30" stroke-width="1.3"/><path d="M-2 13.2h6.7M-2 16.9h4.5" stroke="#1f1d30" stroke-width="1.3"/><circle cx="10.1" cy="26.5" r="5" fill="#9fd0f2" stroke="#1f1d30" stroke-width="1.6"/><path d="M13.7 30.1l4 3.700" stroke="#1f1d30" stroke-width="1.6"/></svg>
<div class="t" style="left:31.5px;top:400.6px;font-size:13.2px;font-weight:bold;color:#2a2154">Penerimaan</div>
<svg style="left:0;top:0" width="878" height="632"><g transform="translate(-234,-109)" fill="none" stroke="#1c1a44" stroke-width="1.7"><path d="M403 516.4H412.5M412.5 516.4V394.3Q412.5 388.3 418.5 388.3H424M412.5 516.4V638.3Q412.5 644.3 418.5 644.3H424M684 388.3H693.6M693.6 388.3V221.0Q693.6 215.0 699.6 215.0H704.5M693.6 388.3V249.82999999999998Q693.6 243.82999999999998 699.6 243.82999999999998H704.5M693.6 388.3V278.65999999999997Q693.6 272.65999999999997 699.6 272.65999999999997H704.5M693.6 388.3V307.49Q693.6 301.49 699.6 301.49H704.5M693.6 388.3V336.32Q693.6 330.32 699.6 330.32H704.5M693.6 388.3V365.15Q693.6 359.15 699.6 359.15H704.5M693.6 387.98H704.5M693.6 388.3V410.81Q693.6 416.81 699.6 416.81H704.5M693.6 388.3V439.64Q693.6 445.64 699.6 445.64H704.5M693.6 388.3V468.46999999999997Q693.6 474.46999999999997 699.6 474.46999999999997H704.5M693.6 388.3V503.8Q693.6 509.8 699.6 509.8H704.5M693.6 388.3V539.4Q693.6 545.4 699.6 545.4H704.5M684 644.3H693.6M693.6 644.3V579.4Q693.6 573.4 699.6 573.4H704.5M693.6 644.3V608.23Q693.6 602.23 699.6 602.23H704.5M693.6 644.3V637.06Q693.6 631.06 699.6 631.06H704.5M693.6 644.3V653.89Q693.6 659.89 699.6 659.89H704.5M693.6 644.3V682.72Q693.6 688.72 699.6 688.72H704.5M693.6 644.3V711.55Q693.6 717.55 699.6 717.55H704.5M937.5 631.06H957.5"/></g></svg>
<div class="node" style="left:190.0px;top:268.3px;width:260px;height:21px;">Kategori penerimaan</div>
<div class="node" style="left:190.0px;top:524.3px;width:260px;height:21px;">db filter</div>
<div class="node" style="left:470.5px;top:95.0px;width:233px;height:21px;">Infaq</div>
<div class="node" style="left:470.5px;top:123.8px;width:233px;height:21px;">Shadaqah</div>
<div class="node" style="left:470.5px;top:152.7px;width:233px;height:21px;">Wakaf</div>
<div class="node" style="left:470.5px;top:181.5px;width:233px;height:21px;">Hibah</div>
<div class="node" style="left:470.5px;top:210.3px;width:233px;height:21px;">Dana CSR Syariah</div>
<div class="node" style="left:470.5px;top:239.1px;width:233px;height:21px;">Fidyah</div>
<div class="node" style="left:470.5px;top:268.0px;width:233px;height:21px;">Kafarat</div>
<div class="node" style="left:470.5px;top:296.8px;width:233px;height:21px;">Harta Tidak Bertuan / Harta Temuan</div>
<div class="node" style="left:470.5px;top:325.6px;width:233px;height:21px;">Bantuan dari pemerintah</div>
<div class="node" style="left:470.5px;top:354.5px;width:233px;height:21px;">Hibah dari lembaga internasional</div>
<div class="node" style="left:470.5px;top:383.6px;width:233px;height:34.5px;line-height:13px;padding-top:3.5px">Sumbangan masyarakat yang tidak termasuk<br>dalam kategori di atas</div>
<div class="node" style="left:470.5px;top:425.4px;width:233px;height:21px;">Add net kategori ( dinamis )</div>
<div class="node" style="left:470.5px;top:453.4px;width:233px;height:21px;">Data bulanan</div>
<div class="node" style="left:470.5px;top:482.2px;width:233px;height:21px;">data tahunan</div>
<div class="node" style="left:470.5px;top:511.1px;width:233px;height:21px;">data per wilayah kecamatan</div>
<div class="node" style="left:470.5px;top:539.9px;width:233px;height:21px;">by NIK</div>
<div class="node" style="left:470.5px;top:568.7px;width:233px;height:21px;">By kategori</div>
<div class="node" style="left:470.5px;top:597.5px;width:233px;height:21px;">By Name</div>
<div class="node" style="left:723.5px;top:510.6px;width:118px;height:21px;">data per wilayah desa</div>
<div class="a" style="left:871.5px;top:148px;width:4px;height:162px;border-radius:2px;background:#bdbdbd"></div>
<div class="a" style="left:470px;top:626.5px;width:197px;height:4px;border-radius:2px;background:#bdbdbd"></div>
  </div>
  <div id="panel" class="a">
<div class="t" style="left:28.5px;top:11.3px;font-size:10px;color:#7c7e82;">Style</div>
<div class="t" style="left:89.0px;top:11.3px;font-size:10px;color:#7c7e82;">Pitch</div>
<div class="t" style="left:151.4px;top:11.3px;font-size:10px;color:#f0f0f0;">Map</div>
<div class="a" style="left:137.0px;top:29.2px;width:31.0px;height:2.0px;background:#e8e8e8;border-radius:1px"></div>
<div class="a" style="left:16.0px;top:39.5px;width:152.0px;height:48.2px;background:#2b2d31;border-radius:7px"></div>
<div class="a" style="left:22.2px;top:44.1px;width:58.4px;height:36.4px;background:#fff;border-radius:4px"></div>
<svg style="left:24.0px;top:51.5px" width="56.0" height="22.0"><g fill="none" stroke="#e2e2e2" stroke-width="2.2"><path d="M3 3h12M5 10h13M3 17h12"/><path d="M15 3c5 0 6 3 6 7s-1 7-6 7M41 3c-5 0-6 3-6 7s1 7 6 7"/><path d="M41 3h12M38 10h13M41 17h12"/></g><rect x="20" y="8" width="16" height="4" fill="#e2e2e2"/></svg>
<div class="t" style="left:87.7px;top:57.4px;font-size:10px;color:#e0e0e0;">Mind Map</div>
<div class="a" style="left:15.0px;top:102.5px;width:153.0px;height:1.0px;background:#34363a"></div>
<div class="t" style="left:15.7px;top:119.7px;font-size:8.5px;color:#808080;">Color Theme</div>
<div class="a" style="left:15.3px;top:132.8px;width:136.5px;height:23.1px;background:#2c2e32;border-radius:5px"></div>
<div class="a" style="left:22px;top:139.5px;width:64px;height:9.5px;border-radius:5px;overflow:hidden;display:flex"><i style="flex:1;background:#f4f4f4"></i><i style="flex:1;background:#f4aaa1"></i><i style="flex:1;background:#f26c2c"></i><i style="flex:1;background:#90b5f7"></i><i style="flex:1;background:#4b57d9"></i><i style="flex:1;background:#1e1e6a"></i></div>
<div class="t" style="left:91.0px;top:139.2px;font-size:10.5px;color:#e6e6e6;">Kimono</div>
<svg style="left:136.0px;top:141.5px" width="9.0" height="6.0"><path d="M1 1l3.5 3.5L8 1" fill="none" stroke="#ccc" stroke-width="1.2"/></svg>
<div class="a" style="left:17.7px;top:167.2px;width:53.0px;height:32.3px;background:#fff;border-radius:4px;overflow:hidden;box-shadow:0 0 0 1.4px #25272b,0 0 0 2.7px #d0d0d0"></div>
<svg style="left:17.7px;top:167.2px" width="53.0" height="32.3"><g fill="none" stroke="#e6e0f0" stroke-width=".6"><path d="M17.5 16.150000000000006C14.5 16.150000000000006 15.5 10.350000000000005 13.0 10.350000000000005M17.5 16.150000000000006H13.0M17.5 16.150000000000006C14.5 16.150000000000006 15.5 21.950000000000006 13.0 21.950000000000006M35.5 16.150000000000006C38.5 16.150000000000006 37.5 10.350000000000005 40.0 10.350000000000005M35.5 16.150000000000006H40.0M35.5 16.150000000000006C38.5 16.150000000000006 37.5 21.950000000000006 40.0 21.950000000000006"/></g><rect x="17.5" y="13.8" width="18" height="4.8" fill="#1c1a5e" rx=".8"/><rect x="4.3" y="9.0" width="9" height="2.8" rx="1" fill="#e8743a"/><rect x="39.7" y="9.0" width="9" height="2.8" rx="1" fill="#f5cfc8"/><rect x="4.3" y="14.8" width="9" height="2.8" rx="1" fill="#f0b0a8"/><rect x="39.7" y="14.8" width="9" height="2.8" rx="1" fill="#f08a4a"/><rect x="4.3" y="20.6" width="9" height="2.8" rx="1" fill="#4a56d8"/><rect x="39.7" y="20.6" width="9" height="2.8" rx="1" fill="#a9c2f2"/></svg>
<div class="a" style="left:76.3px;top:167.2px;width:52.5px;height:32.1px;background:#1c1a63;border-radius:4px;overflow:hidden"></div>
<svg style="left:76.3px;top:167.2px" width="52.5" height="32.1"><g fill="none" stroke="#5a4a8a" stroke-width=".6"><path d="M17.25 16.05000000000001C14.25 16.05000000000001 15.25 10.25000000000001 12.75 10.25000000000001M17.25 16.05000000000001H12.75M17.25 16.05000000000001C14.25 16.05000000000001 15.25 21.850000000000012 12.75 21.850000000000012M35.25 16.05000000000001C38.25 16.05000000000001 37.25 10.25000000000001 39.75 10.25000000000001M35.25 16.05000000000001H39.75M35.25 16.05000000000001C38.25 16.05000000000001 37.25 21.850000000000012 39.75 21.850000000000012"/></g><rect x="17.2" y="13.7" width="18" height="4.8" fill="#f4f4f4" rx=".8"/><rect x="4.1" y="8.6" width="9" height="3.4" rx="1" fill="#e8743a"/><rect x="39.5" y="8.6" width="9" height="3.4" rx="1" fill="#f4b4aa"/><rect x="4.1" y="14.4" width="9" height="3.4" rx="1" fill="#f4b4aa"/><rect x="39.5" y="14.4" width="9" height="3.4" rx="1" fill="#e8743a"/><rect x="4.1" y="20.2" width="9" height="3.4" rx="1" fill="#4a56d8"/><rect x="39.5" y="20.2" width="9" height="3.4" rx="1" fill="#90b5f7"/></svg>
<div class="a" style="left:134.5px;top:167.2px;width:53.5px;height:32.1px;background:#fff;border-radius:4px;overflow:hidden"></div>
<svg style="left:134.5px;top:167.2px" width="53.5" height="32.1"><g fill="none" stroke="#dde" stroke-width=".6"><path d="M17.75 16.05000000000001C14.75 16.05000000000001 15.75 10.25000000000001 13.25 10.25000000000001M17.75 16.05000000000001H13.25M17.75 16.05000000000001C14.75 16.05000000000001 15.75 21.850000000000012 13.25 21.850000000000012M35.75 16.05000000000001C38.75 16.05000000000001 37.75 10.25000000000001 40.25 10.25000000000001M35.75 16.05000000000001H40.25M35.75 16.05000000000001C38.75 16.05000000000001 37.75 21.850000000000012 40.25 21.850000000000012"/></g><rect x="17.8" y="13.7" width="18" height="4.8" fill="#4b57d9" rx=".8"/><rect x="4.6" y="8.9" width="9" height="2.8" rx="1" fill="#90b5f7"/><rect x="40.0" y="8.9" width="9" height="2.8" rx="1" fill="#90b5f7"/><rect x="4.6" y="14.7" width="9" height="2.8" rx="1" fill="#90b5f7"/><rect x="40.0" y="14.7" width="9" height="2.8" rx="1" fill="#90b5f7"/><rect x="4.6" y="20.5" width="9" height="2.8" rx="1" fill="#90b5f7"/><rect x="40.0" y="20.5" width="9" height="2.8" rx="1" fill="#90b5f7"/></svg>
<div class="a" style="left:17.7px;top:205.2px;width:53.0px;height:30.9px;background:#f9a8a4;border-radius:4px;overflow:hidden"></div>
<svg style="left:17.7px;top:205.2px" width="53.0" height="30.9"><g fill="none" stroke="#c07a90" stroke-width=".6"><path d="M17.5 15.450000000000017C14.5 15.450000000000017 15.5 9.650000000000016 13.0 9.650000000000016M17.5 15.450000000000017H13.0M17.5 15.450000000000017C14.5 15.450000000000017 15.5 21.250000000000018 13.0 21.250000000000018M35.5 15.450000000000017C38.5 15.450000000000017 37.5 9.650000000000016 40.0 9.650000000000016M35.5 15.450000000000017H40.0M35.5 15.450000000000017C38.5 15.450000000000017 37.5 21.250000000000018 40.0 21.250000000000018"/></g><rect x="17.5" y="13.1" width="18" height="4.8" fill="#1c1a5e" rx=".8"/><rect x="4.3" y="8.1" width="9" height="3.2" rx="1" fill="#4b57d9"/><rect x="39.7" y="8.1" width="9" height="3.2" rx="1" fill="#4b57d9"/><rect x="4.3" y="13.9" width="9" height="3.2" rx="1" fill="#4b57d9"/><rect x="39.7" y="13.9" width="9" height="3.2" rx="1" fill="#4b57d9"/><rect x="4.3" y="19.7" width="9" height="3.2" rx="1" fill="#4b57d9"/><rect x="39.7" y="19.7" width="9" height="3.2" rx="1" fill="#4b57d9"/></svg>
<div class="a" style="left:76.3px;top:205.2px;width:52.5px;height:30.9px;background:#8ab4f8;border-radius:4px;overflow:hidden"></div>
<svg style="left:76.3px;top:205.2px" width="52.5" height="30.9"><g fill="none" stroke="#6a8ad0" stroke-width=".6"><path d="M17.25 15.450000000000017C14.25 15.450000000000017 15.25 9.650000000000016 12.75 9.650000000000016M17.25 15.450000000000017H12.75M17.25 15.450000000000017C14.25 15.450000000000017 15.25 21.250000000000018 12.75 21.250000000000018M35.25 15.450000000000017C38.25 15.450000000000017 37.25 9.650000000000016 39.75 9.650000000000016M35.25 15.450000000000017H39.75M35.25 15.450000000000017C38.25 15.450000000000017 37.25 21.250000000000018 39.75 21.250000000000018"/></g><rect x="17.2" y="13.1" width="18" height="4.8" fill="#1c1a5e" rx=".8"/><rect x="4.1" y="8.1" width="9" height="3.2" rx="1" fill="#1c1a5e"/><rect x="39.5" y="8.1" width="9" height="3.2" rx="1" fill="#1c1a5e"/><rect x="4.1" y="13.9" width="9" height="3.2" rx="1" fill="#1c1a5e"/><rect x="39.5" y="13.9" width="9" height="3.2" rx="1" fill="#1c1a5e"/><rect x="4.1" y="19.7" width="9" height="3.2" rx="1" fill="#1c1a5e"/><rect x="39.5" y="19.7" width="9" height="3.2" rx="1" fill="#1c1a5e"/></svg>
<div class="a" style="left:134.5px;top:205.2px;width:53.5px;height:30.9px;background:#1c1a63;border-radius:4px;overflow:hidden"></div>
<svg style="left:134.5px;top:205.2px" width="53.5" height="30.9"><g fill="none" stroke="#5a4a8a" stroke-width=".6"><path d="M17.75 15.450000000000017C14.75 15.450000000000017 15.75 9.650000000000016 13.25 9.650000000000016M17.75 15.450000000000017H13.25M17.75 15.450000000000017C14.75 15.450000000000017 15.75 21.250000000000018 13.25 21.250000000000018M35.75 15.450000000000017C38.75 15.450000000000017 37.75 9.650000000000016 40.25 9.650000000000016M35.75 15.450000000000017H40.25M35.75 15.450000000000017C38.75 15.450000000000017 37.75 21.250000000000018 40.25 21.250000000000018"/></g><rect x="17.8" y="13.1" width="18" height="4.8" fill="#f26c2c" rx=".8"/><rect x="4.6" y="8.1" width="9" height="3.2" rx="1" fill="#fff"/><rect x="40.0" y="8.1" width="9" height="3.2" rx="1" fill="#fff"/><rect x="4.6" y="13.9" width="9" height="3.2" rx="1" fill="#fff"/><rect x="40.0" y="13.9" width="9" height="3.2" rx="1" fill="#fff"/><rect x="4.6" y="19.7" width="9" height="3.2" rx="1" fill="#fff"/><rect x="40.0" y="19.7" width="9" height="3.2" rx="1" fill="#fff"/></svg>
<div class="a" style="left:15.0px;top:253.5px;width:153.0px;height:1.0px;background:#34363a"></div>
<div class="t" style="left:15.5px;top:273.7px;font-size:10px;color:#e0e0e0;">Background Color</div>
<div class="a" style="left:132.0px;top:269.9px;width:36.0px;height:17.3px;background:#fff;border-radius:4px"></div>
<div class="a" style="left:15.0px;top:302.5px;width:153.0px;height:1.0px;background:#34363a"></div>
<div class="t" style="left:15.5px;top:318.8px;font-size:8.5px;color:#7a7a7a;">Global Font</div>
<div class="a" style="left:15.5px;top:331.9px;width:152.5px;height:18.0px;background:#2b2d31;border-radius:4px"></div>
<div class="t" style="left:22.5px;top:336.2px;font-size:10px;color:#e0e0e0;">Default</div>
<div class="t" style="left:15.5px;top:360.3px;font-size:8.5px;color:#7a7a7a;">Branch Line Width</div>
<div class="a" style="left:15.5px;top:373.0px;width:152.5px;height:18.0px;background:#2b2d31;border-radius:4px"></div>
<div class="t" style="left:22.5px;top:377.2px;font-size:10px;color:#e0e0e0;">Default</div>
<div class="a" style="left:15.7px;top:410.5px;width:10.3px;height:9.8px;background:#35373b;border-radius:2px"></div>
<div class="t" style="left:32.0px;top:410.4px;font-size:10px;color:#e0e0e0;">Colored Branch</div>
<div class="a" style="left:132.0px;top:406.1px;width:36.0px;height:17.4px;background:#1c1a6e;border-radius:4px;box-shadow:inset 0 0 0 1px #2a2a80"></div>
<div class="a" style="left:15.0px;top:439.0px;width:153.0px;height:1.0px;background:#34363a"></div>
<div class="t" style="left:15.7px;top:456.3px;font-size:10px;color:#ececec;font-weight:bold;">Map Style</div>
<div class="a" style="left:15.7px;top:478.2px;width:10.3px;height:9.8px;background:#35373b;border-radius:2px"></div>
<div class="t" style="left:31.9px;top:478.3px;font-size:10px;color:#e0e0e0;">Auto Balance Map</div>
<div class="a" style="left:15.7px;top:499.9px;width:10.3px;height:9.8px;background:#35373b;border-radius:2px"></div>
<div class="a" style="left:32.5px;top:500.0px;width:9.0px;height:9.5px;background:#c8321e;border-radius:2px"></div>
<svg style="left:34.3px;top:501.0px" width="6.0" height="8.0"><path d="M1.5 3.2V2.300a1.500 1.500 0 0 1 3 0v.9" fill="none" stroke="#fff" stroke-width=".9"/><rect x=".8" y="3.200" width="4.400" height="3.500" rx=".5" fill="#fff"/></svg>
<div class="t" style="left:45.6px;top:500.0px;font-size:10px;color:#e0e0e0;">Compact Map</div>
<div class="a" style="left:15.7px;top:521.3px;width:10.3px;height:9.8px;background:#f4f4f4;border-radius:2px"></div>
<svg style="left:16.5px;top:522.0px" width="9.0" height="9.0"><path d="M1.800 4.500l2 2.200L7.300 2" fill="none" stroke="#222" stroke-width="1.200"/></svg>
<div class="a" style="left:32.5px;top:521.5px;width:9.0px;height:9.5px;background:#c8321e;border-radius:2px"></div>
<svg style="left:34.3px;top:522.5px" width="6.0" height="8.0"><path d="M1.5 3.2V2.300a1.500 1.500 0 0 1 3 0v.9" fill="none" stroke="#fff" stroke-width=".9"/><rect x=".8" y="3.200" width="4.400" height="3.500" rx=".5" fill="#fff"/></svg>
<div class="t" style="left:45.6px;top:521.4px;font-size:10px;color:#e0e0e0;">Justify Topic Alignment</div>
<div class="a" style="left:15.0px;top:547.5px;width:153.0px;height:1.0px;background:#34363a"></div>
<div class="t" style="left:15.7px;top:564.7px;font-size:10px;color:#ececec;font-weight:bold;">Advanced Layout</div>
<div class="a" style="left:15.7px;top:586.5px;width:10.3px;height:9.8px;background:#35373b;border-radius:2px"></div>
<div class="t" style="left:31.9px;top:586.7px;font-size:10px;color:#e0e0e0;">Branch Free-Positioning</div>
<div class="a" style="left:15.7px;top:608.3px;width:10.3px;height:9.8px;background:#35373b;border-radius:2px"></div>
<div class="t" style="left:31.9px;top:608.4px;font-size:10px;color:#e0e0e0;">Flexible Floating Topic</div>
<div class="a" style="left:15.7px;top:630.0px;width:10.3px;height:9.5px;background:#35373b;border-radius:2px"></div>
<div class="t" style="left:31.9px;top:630.2px;font-size:10px;color:#e0e0e0;">Topic Overlap</div>
  </div>
  <!-- status -->
  <div class="t" style="left:937px;top:679px;font-size:10px;color:#d8d8d8">Topics: 72</div>
  <div class="a" style="left:991px;top:679px;width:1px;height:10px;background:#444"></div>
  <div class="t" style="left:1001px;top:679px;font-size:10px;color:#d8d8d8">104%</div>
  <svg style="left:1028px;top:681px" width="8" height="6"><path d="M1 1l3 3 3-3" fill="none" stroke="#ccc" stroke-width="1.1"/></svg>
  <div class="a" style="left:1047px;top:679px;width:1px;height:10px;background:#444"></div>
</div>

</body></html>
